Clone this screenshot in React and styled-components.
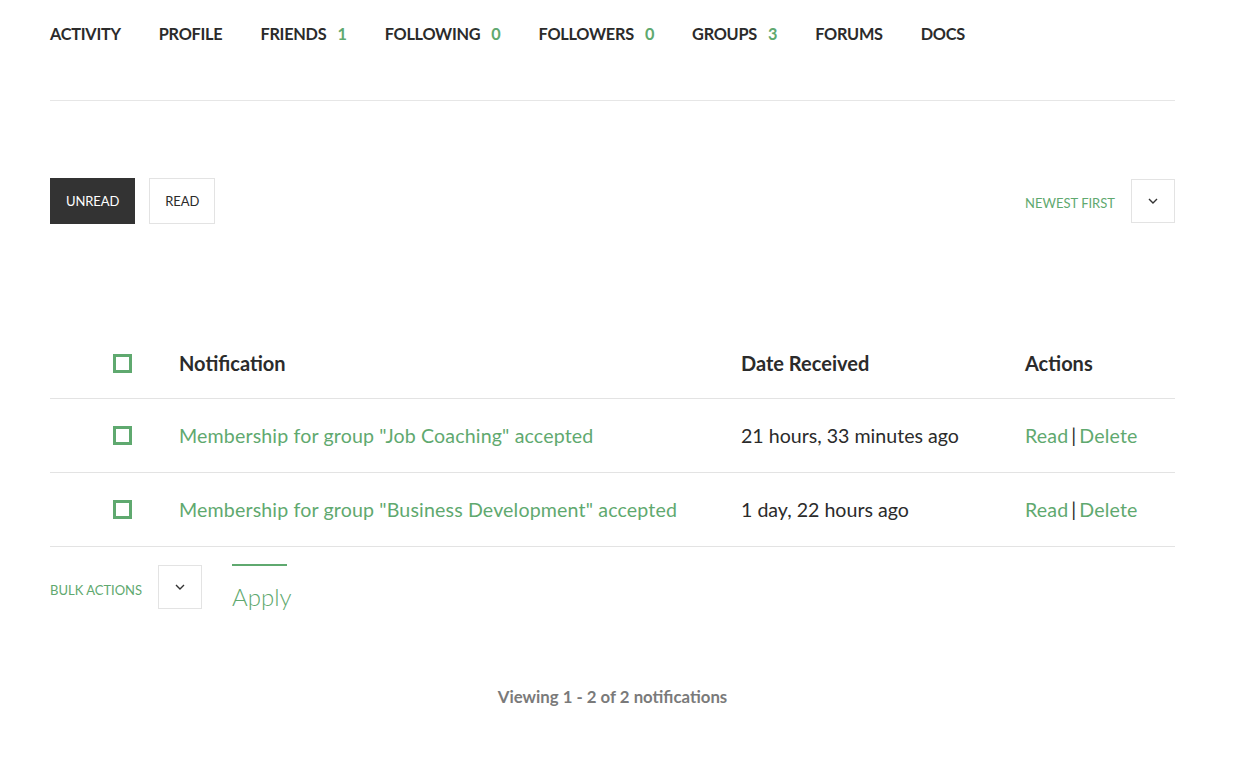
import React from 'react';
import styled, { createGlobalStyle } from 'styled-components';

const GREEN = '#5fa96f';
const DARK = '#2b2b2b';

const Global = createGlobalStyle`
  body {
    margin: 0;
    background: #fff;
    font-family: 'Lato', 'Open Sans', sans-serif;
    color: ${DARK};
  }
`;

const Page = styled.div`
  width: 1125px;
  margin-left: 50px;
`;

const Nav = styled.nav`
  display: flex;
  gap: 38px;
  height: 101px;
  padding-top: 24px;
  box-sizing: border-box;
  border-bottom: 1px solid #e6e6e6;
`;

const NavItem = styled.a`
  font-size: 16.3px;
  font-weight: 700;
  text-transform: uppercase;
  color: ${DARK};
  letter-spacing: -0.25px;
  white-space: nowrap;
`;

const Count = styled.span`
  color: ${GREEN};
  margin-left: 11px;
`;

const FilterBar = styled.div`
  display: flex;
  justify-content: space-between;
  align-items: center;
  margin-top: 77px;
`;

const Tabs = styled.div`
  display: flex;
  gap: 14px;
`;

const Tab = styled.button`
  height: 46px;
  padding: 0 15px;
  font-family: inherit;
  font-size: 13px;
  letter-spacing: -0.1px;
  border: 1px solid ${(p) => (p.$active ? '#333' : '#e3e3e3')};
  background: ${(p) => (p.$active ? '#333' : '#fff')};
  color: ${(p) => (p.$active ? '#fff' : DARK)};
  cursor: pointer;
`;

const SortGroup = styled.div`
  display: flex;
  align-items: center;
  gap: 16px;
`;

const SmallLabel = styled.span`
  font-size: 13px;
  color: ${GREEN};
  text-transform: uppercase;
  padding-top: 4px;
`;

const SelectBox = styled.div`
  width: 44px;
  height: 44px;
  box-sizing: border-box;
  border: 1px solid #e3e3e3;
  display: flex;
  align-items: center;
  justify-content: center;
`;

const Table = styled.div`
  margin-top: 116px;
`;

const Row = styled.div`
  display: grid;
  grid-template-columns: 129px 562px 284px 1fr;
  align-items: center;
  height: ${(p) => (p.$head ? '59px' : '74px')};
  padding-bottom: ${(p) => (p.$head ? '12px' : '0')};
  box-sizing: border-box;
  border-bottom: 1px solid #e3e3e3;
`;

const Check = styled.span`
  display: block;
  width: 19px;
  height: 19px;
  box-sizing: border-box;
  border: 3px solid ${GREEN};
  margin-left: 63px;
`;

const Th = styled.div`
  font-size: 20px;
  font-weight: 700;
  color: ${DARK};
`;

const Td = styled.div`
  font-size: 19.6px;
  color: ${(p) => (p.$green ? GREEN : DARK)};
  letter-spacing: ${(p) => (p.$green ? '0.15px' : '0')};
`;

const Sep = styled.span`
  color: ${DARK};
  margin: 0 3px;
`;

const BulkBar = styled.div`
  display: flex;
  align-items: center;
  margin-top: 17px;
`;

const BulkLabel = styled(SmallLabel)`
  margin-right: 16px;
  padding-top: 6px;
`;

const Apply = styled.button`
  margin-left: 30px;
  height: 46px;
  border: none;
  border-top: 2px solid ${GREEN};
  background: none;
  font-family: inherit;
  font-size: 24px;
  font-weight: 300;
  color: ${GREEN};
  padding: 18px 0 0;
  box-sizing: border-box;
  line-height: 1;
  width: 55px;
  text-align: left;
`;

const Footer = styled.div`
  text-align: center;
  margin-top: 76px;
  font-size: 16.8px;
  font-weight: 700;
  color: #7a7a7a;
`;

const Chevron = () => (
  <svg width="10" height="6" viewBox="0 0 10 6">
    <path d="M1 1l4 4 4-4" fill="none" stroke="#333" strokeWidth="1.4" />
  </svg>
);

const nav = [
  ['Activity'],
  ['Profile'],
  ['Friends', 1],
  ['Following', 0],
  ['Followers', 0],
  ['Groups', 3],
  ['Forums'],
  ['Docs'],
];

const rows = [
  { text: 'Membership for group "Job Coaching" accepted', date: '21 hours, 33 minutes ago' },
  { text: 'Membership for group "Business Development" accepted', date: '1 day, 22 hours ago' },
];

export default function App() {
  return (
    <Page>
      <Global />
      <Nav>
        {nav.map(([label, n]) => (
          <NavItem key={label}>
            {label}
            {n !== undefined && <Count>{n}</Count>}
          </NavItem>
        ))}
      </Nav>
      <FilterBar>
        <Tabs>
          <Tab $active>UNREAD</Tab>
          <Tab>READ</Tab>
        </Tabs>
        <SortGroup>
          <SmallLabel>Newest First</SmallLabel>
          <SelectBox>
            <Chevron />
          </SelectBox>
        </SortGroup>
      </FilterBar>
      <Table>
        <Row $head>
          <Check />
          <Th>Notification</Th>
          <Th>Date Received</Th>
          <Th>Actions</Th>
        </Row>
        {rows.map((r) => (
          <Row key={r.text}>
            <Check />
            <Td $green>{r.text}</Td>
            <Td>{r.date}</Td>
            <Td $green>
              Read<Sep>|</Sep>Delete
            </Td>
          </Row>
        ))}
      </Table>
      <BulkBar>
        <BulkLabel>Bulk Actions</BulkLabel>
        <SelectBox>
          <Chevron />
        </SelectBox>
        <Apply>Apply</Apply>
      </BulkBar>
      <Footer>Viewing 1 - 2 of 2 notifications</Footer>
    </Page>
  );
}
